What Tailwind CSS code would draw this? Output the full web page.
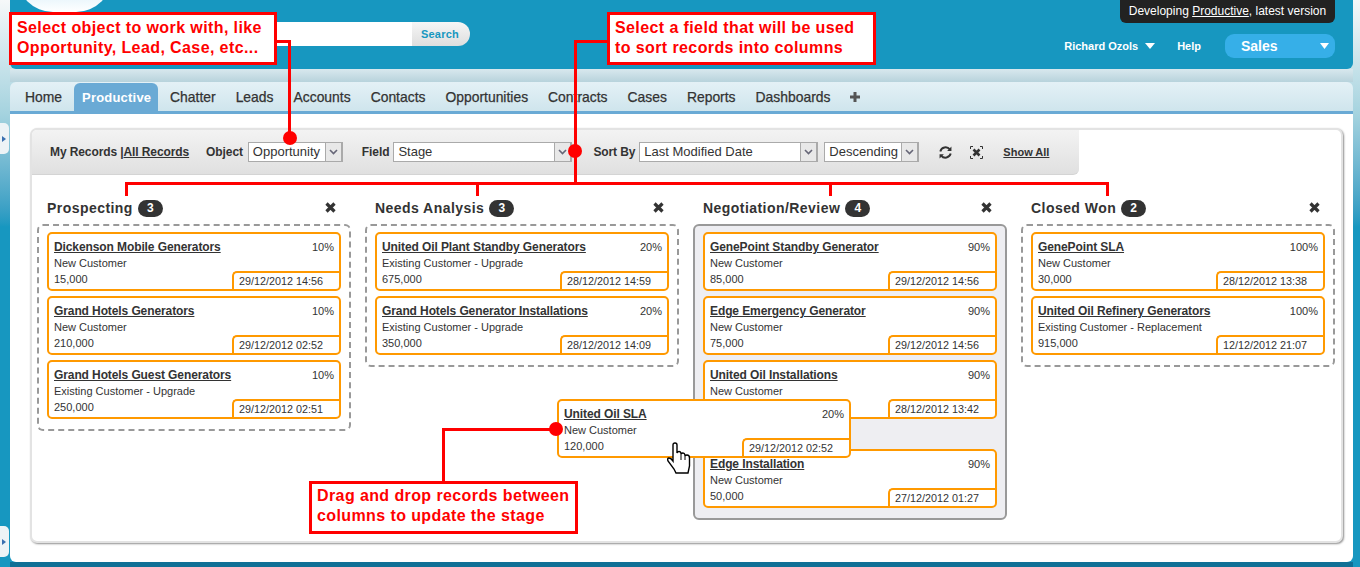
<!DOCTYPE html>
<html lang="en">
<head>
    <meta charset="UTF-8">
    <meta name="viewport" content="width=device-width, initial-scale=1.0">
    <title>Productive</title>
    <script src="https://cdn.jsdelivr.net/npm/@tailwindcss/browser@4"></script>
</head>
<body class="m-0 overflow-hidden">
<div class="relative w-[1360px] h-[567px] overflow-hidden pl-[10px] pr-[7px] flex flex-col font-['Liberation_Sans',Arial,sans-serif] text-[#333] bg-linear-to-b from-[#f6f8f9] via-[#a5d3df] via-[20%] to-[#1797c0] to-[40%]">

    <!-- header -->
    <div class="relative h-[69px] shrink-0 bg-[#1797c0] rounded-b-[6px] flex items-start">
        <div class="absolute left-[7px] -top-[60px] w-[95px] h-[72px] rounded-[40px] bg-linear-to-b from-[#8fd0ec] to-[#ffffff]"></div>
        <div class="ml-[250px] mt-[22px] flex h-[24px]">
            <div class="w-[152px] bg-white"></div>
            <div class="w-[58px] rounded-r-full bg-linear-to-b from-[#f6f6f6] to-[#dedede] text-[#1797c0] text-[11px] font-bold tracking-[0.2px] leading-[24px] pl-[9px]">Search</div>
        </div>
        <div class="ml-auto mr-[18px] mt-[34px] flex items-center h-[24px] text-white">
            <span class="text-[11px] font-bold">Richard Ozols</span>
            <svg class="ml-[7px]" width="10" height="6" viewBox="0 0 10 6"><path d="M0 0h10L5 6z" fill="#fff"/></svg>
            <span class="ml-[22px] text-[11px] font-bold">Help</span>
            <div class="ml-[24px] w-[110px] h-[24px] rounded-[9px] bg-[#36afe8] flex items-center pl-[16px] pr-[6px] justify-between">
                <span class="text-[14px] font-bold">Sales</span>
                <svg width="9" height="6" viewBox="0 0 9 6"><path d="M0 0h9L4.5 6z" fill="#fff"/></svg>
            </div>
        </div>
        <div class="absolute right-[18px] top-0 w-[215px] h-[23px] rounded-b-[6px] bg-[#222] text-white text-[12px] leading-[23px] text-center">Developing <span class="underline">Productive</span>, latest version</div>
    </div>
    <div class="h-[13px] shrink-0 bg-linear-to-b from-[#d8e8ee] to-[#b8d3dc]"></div>

    <!-- tabs -->
    <div class="h-[32px] shrink-0 rounded-t-[6px] bg-linear-to-b from-[#e4f1f6] to-[#cfe5ed] border-b-[3px] border-[#6aaad5] flex items-end pl-[7px] gap-[4px] text-[13.9px] text-[#333] [-webkit-text-stroke:0.25px_#333]">
        <div class="h-[28px] px-[8px] leading-[29px]">Home</div>
        <div class="h-[28px] px-[8px] leading-[29px] rounded-t-[6px] bg-[#6aaad5] text-white font-bold text-[13px] tracking-[0.2px] [-webkit-text-stroke:0px] w-[84px]">Productive</div>
        <div class="h-[28px] px-[8px] leading-[29px]">Chatter</div>
        <div class="h-[28px] px-[8px] leading-[29px]">Leads</div>
        <div class="h-[28px] px-[8px] leading-[29px]">Accounts</div>
        <div class="h-[28px] px-[8px] leading-[29px]">Contacts</div>
        <div class="h-[28px] px-[8px] leading-[29px]">Opportunities</div>
        <div class="h-[28px] px-[8px] leading-[29px]">Contracts</div>
        <div class="h-[28px] px-[8px] leading-[29px]">Cases</div>
        <div class="h-[28px] px-[8px] leading-[29px]">Reports</div>
        <div class="h-[28px] px-[8px] leading-[29px]">Dashboards</div>
        <div class="h-[28px] px-[8px] flex items-center">
            <svg width="10" height="10" viewBox="0 0 10 10"><path d="M3.5 0h3v3.5H10v3H6.500V10h-3V6.500H0v-3h3.500z" fill="#555"/></svg>
        </div>
    </div>

    <!-- main panel -->
    <div class="h-[448px] shrink-0 bg-white rounded-b-[6px] pt-[14px] pl-[20px] pr-[10px]">
        <div class="h-[415px] rounded-[7px] border-2 border-[#e3e3e3] shadow-[1px_1px_2px_#8f8f8f] bg-white">

            <!-- toolbar -->
            <div class="w-[1047px] h-[45px] rounded-br-[6px] rounded-tl-[5px] bg-linear-to-b from-[#f3f3f3] to-[#e0e0e0] border-b border-[#d4d4d4] flex items-center pl-[18px] text-[12px] tracking-[-0.1px] font-bold">
                <span>My Records |<span class="underline">All Records</span></span>
                <span class="ml-[17px]">Object</span>
                <div class="ml-[5px] w-[95px] h-[20px] border border-[#aaa] bg-white flex justify-between font-normal tracking-normal text-[13px] leading-[18px] pl-[4px]">
                    <span>Opportunity</span>
                    <span class="w-[17px] bg-[#e8e8e8] border-l border-r border-[#aaa] flex items-center justify-center"><svg width="9" height="6" viewBox="0 0 9 6"><path d="M1 1l3.5 3.5L8 1" fill="none" stroke="#667" stroke-width="1.6"/></svg></span>
                </div>
                <span class="ml-[19px]">Field</span>
                <div class="ml-[4px] w-[179px] h-[20px] border border-[#aaa] bg-white flex justify-between font-normal tracking-normal text-[13px] leading-[18px] pl-[4px]">
                    <span>Stage</span>
                    <span class="w-[17px] bg-[#e8e8e8] border-l border-r border-[#aaa] flex items-center justify-center"><svg width="9" height="6" viewBox="0 0 9 6"><path d="M1 1l3.5 3.5L8 1" fill="none" stroke="#667" stroke-width="1.6"/></svg></span>
                </div>
                <span class="ml-[21px]">Sort By</span>
                <div class="ml-[4px] w-[179px] h-[20px] border border-[#aaa] bg-white flex justify-between font-normal tracking-normal text-[13px] leading-[18px] pl-[4px]">
                    <span>Last Modified Date</span>
                    <span class="w-[17px] bg-[#e8e8e8] border-l border-r border-[#aaa] flex items-center justify-center"><svg width="9" height="6" viewBox="0 0 9 6"><path d="M1 1l3.5 3.5L8 1" fill="none" stroke="#667" stroke-width="1.6"/></svg></span>
                </div>
                <div class="ml-[6px] w-[95px] h-[20px] border border-[#aaa] bg-white flex justify-between font-normal tracking-normal text-[13px] leading-[18px] pl-[4px]">
                    <span>Descending</span>
                    <span class="w-[17px] bg-[#e8e8e8] border-l border-r border-[#aaa] flex items-center justify-center"><svg width="9" height="6" viewBox="0 0 9 6"><path d="M1 1l3.5 3.5L8 1" fill="none" stroke="#667" stroke-width="1.6"/></svg></span>
                </div>
                <svg class="ml-[20px]" width="13" height="13" viewBox="0 0 12 12" fill="none" stroke="#333" stroke-width="1.8"><path d="M1.200 5A5 5 0 0 1 10 3.200"/><path d="M10.800 7A5 5 0 0 1 2 8.800"/><path d="M11.500 0.500v4h-4z" fill="#333" stroke="none"/><path d="M0.500 11.500v-4h4z" fill="#333" stroke="none"/></svg>
                <svg class="ml-[18px]" width="13" height="13" viewBox="0 0 13 13" fill="none" stroke="#333"><path d="M0.500 3V0.500H3M10 0.500h2.500V3M12.500 10v2.500H10M3 12.500H0.500V10"/><path d="M3.500 3.500l6 6M9.500 3.500l-6 6" stroke-width="2.6"/></svg>
                <span class="ml-[20px] text-[11px] tracking-normal underline">Show All</span>
            </div>

            <!-- columns -->
            <div class="flex gap-[14px] pl-[5px] pt-[22px]">

                <div class="w-[314px]">
                    <div class="h-[27px] flex items-center pb-[4px] pl-[10px] pr-[15px]">
                        <span class="text-[14px] font-bold tracking-[0.45px]">Prospecting</span>
                        <span class="ml-[5px] w-[25px] h-[17px] rounded-full bg-[#333] text-white text-[12px] font-bold leading-[17px] text-center">3</span>
                        <svg class="ml-auto -mt-[2px]" width="11" height="11" viewBox="0 0 11 11"><path d="M1.500 1.500l8 8M9.500 1.500l-8 8" stroke="#333" stroke-width="3.2"/></svg>
                    </div>
                    <div class="border-2 border-dashed border-[#999] rounded-[6px] pt-[6px] pb-[10px] px-[8px] flex flex-col gap-[5px]">
                        <div class="h-[59px] border-2 border-[#f90] rounded-[5px] bg-white pt-[5px] pl-[5px] flex flex-col">
                            <div class="flex justify-between pr-[5px] leading-4"><span class="text-[12px] tracking-[-0.1px] font-bold underline">Dickenson Mobile Generators</span><span class="text-[11px]">10%</span></div>
                            <div class="text-[11px] leading-4">New Customer</div>
                            <div class="flex justify-between text-[11px]"><span class="leading-4">15,000</span><span class="w-[107px] h-[18px] border-t-2 border-l-2 border-[#f90] rounded-tl-[5px] pl-[5px] text-[10.8px] leading-[16px]">29/12/2012 14:56</span></div>
                        </div>
                        <div class="h-[59px] border-2 border-[#f90] rounded-[5px] bg-white pt-[5px] pl-[5px] flex flex-col">
                            <div class="flex justify-between pr-[5px] leading-4"><span class="text-[12px] tracking-[-0.1px] font-bold underline">Grand Hotels Generators</span><span class="text-[11px]">10%</span></div>
                            <div class="text-[11px] leading-4">New Customer</div>
                            <div class="flex justify-between text-[11px]"><span class="leading-4">210,000</span><span class="w-[107px] h-[18px] border-t-2 border-l-2 border-[#f90] rounded-tl-[5px] pl-[5px] text-[10.8px] leading-[16px]">29/12/2012 02:52</span></div>
                        </div>
                        <div class="h-[59px] border-2 border-[#f90] rounded-[5px] bg-white pt-[5px] pl-[5px] flex flex-col">
                            <div class="flex justify-between pr-[5px] leading-4"><span class="text-[12px] tracking-[-0.1px] font-bold underline">Grand Hotels Guest Generators</span><span class="text-[11px]">10%</span></div>
                            <div class="text-[11px] leading-4">Existing Customer - Upgrade</div>
                            <div class="flex justify-between text-[11px]"><span class="leading-4">250,000</span><span class="w-[107px] h-[18px] border-t-2 border-l-2 border-[#f90] rounded-tl-[5px] pl-[5px] text-[10.8px] leading-[16px]">29/12/2012 02:51</span></div>
                        </div>
                    </div>
                </div>

                <div class="w-[314px]">
                    <div class="h-[27px] flex items-center pb-[4px] pl-[10px] pr-[15px]">
                        <span class="text-[14px] font-bold tracking-[0.45px]">Needs Analysis</span>
                        <span class="ml-[5px] w-[25px] h-[17px] rounded-full bg-[#333] text-white text-[12px] font-bold leading-[17px] text-center">3</span>
                        <svg class="ml-auto -mt-[2px]" width="11" height="11" viewBox="0 0 11 11"><path d="M1.500 1.500l8 8M9.500 1.500l-8 8" stroke="#333" stroke-width="3.2"/></svg>
                    </div>
                    <div class="border-2 border-dashed border-[#999] rounded-[6px] pt-[6px] pb-[10px] px-[8px] flex flex-col gap-[5px]">
                        <div class="h-[59px] border-2 border-[#f90] rounded-[5px] bg-white pt-[5px] pl-[5px] flex flex-col">
                            <div class="flex justify-between pr-[5px] leading-4"><span class="text-[12px] tracking-[-0.1px] font-bold underline">United Oil Plant Standby Generators</span><span class="text-[11px]">20%</span></div>
                            <div class="text-[11px] leading-4">Existing Customer - Upgrade</div>
                            <div class="flex justify-between text-[11px]"><span class="leading-4">675,000</span><span class="w-[107px] h-[18px] border-t-2 border-l-2 border-[#f90] rounded-tl-[5px] pl-[5px] text-[10.8px] leading-[16px]">28/12/2012 14:59</span></div>
                        </div>
                        <div class="h-[59px] border-2 border-[#f90] rounded-[5px] bg-white pt-[5px] pl-[5px] flex flex-col">
                            <div class="flex justify-between pr-[5px] leading-4"><span class="text-[12px] tracking-[-0.1px] font-bold underline">Grand Hotels Generator Installations</span><span class="text-[11px]">20%</span></div>
                            <div class="text-[11px] leading-4">Existing Customer - Upgrade</div>
                            <div class="flex justify-between text-[11px]"><span class="leading-4">350,000</span><span class="w-[107px] h-[18px] border-t-2 border-l-2 border-[#f90] rounded-tl-[5px] pl-[5px] text-[10.8px] leading-[16px]">28/12/2012 14:09</span></div>
                        </div>
                    </div>
                </div>

                <div class="w-[314px]">
                    <div class="h-[27px] flex items-center pb-[4px] pl-[10px] pr-[15px]">
                        <span class="text-[14px] font-bold tracking-[0.45px]">Negotiation/Review</span>
                        <span class="ml-[5px] w-[25px] h-[17px] rounded-full bg-[#333] text-white text-[12px] font-bold leading-[17px] text-center">4</span>
                        <svg class="ml-auto -mt-[2px]" width="11" height="11" viewBox="0 0 11 11"><path d="M1.500 1.500l8 8M9.500 1.500l-8 8" stroke="#333" stroke-width="3.2"/></svg>
                    </div>
                    <div class="border-2 border-[#999] rounded-[6px] bg-[#eeeef2] pt-[6px] pb-[10px] px-[8px] flex flex-col gap-[5px]">
                        <div class="h-[59px] border-2 border-[#f90] rounded-[5px] bg-white pt-[5px] pl-[5px] flex flex-col">
                            <div class="flex justify-between pr-[5px] leading-4"><span class="text-[12px] tracking-[-0.1px] font-bold underline">GenePoint Standby Generator</span><span class="text-[11px]">90%</span></div>
                            <div class="text-[11px] leading-4">New Customer</div>
                            <div class="flex justify-between text-[11px]"><span class="leading-4">85,000</span><span class="w-[107px] h-[18px] border-t-2 border-l-2 border-[#f90] rounded-tl-[5px] pl-[5px] text-[10.8px] leading-[16px]">29/12/2012 14:56</span></div>
                        </div>
                        <div class="h-[59px] border-2 border-[#f90] rounded-[5px] bg-white pt-[5px] pl-[5px] flex flex-col">
                            <div class="flex justify-between pr-[5px] leading-4"><span class="text-[12px] tracking-[-0.1px] font-bold underline">Edge Emergency Generator</span><span class="text-[11px]">90%</span></div>
                            <div class="text-[11px] leading-4">New Customer</div>
                            <div class="flex justify-between text-[11px]"><span class="leading-4">75,000</span><span class="w-[107px] h-[18px] border-t-2 border-l-2 border-[#f90] rounded-tl-[5px] pl-[5px] text-[10.8px] leading-[16px]">29/12/2012 14:56</span></div>
                        </div>
                        <div class="h-[59px] border-2 border-[#f90] rounded-[5px] bg-white pt-[5px] pl-[5px] flex flex-col">
                            <div class="flex justify-between pr-[5px] leading-4"><span class="text-[12px] tracking-[-0.1px] font-bold underline">United Oil Installations</span><span class="text-[11px]">90%</span></div>
                            <div class="text-[11px] leading-4">New Customer</div>
                            <div class="flex justify-between text-[11px]"><span class="leading-4">65,000</span><span class="w-[107px] h-[18px] border-t-2 border-l-2 border-[#f90] rounded-tl-[5px] pl-[5px] text-[10.8px] leading-[16px]">28/12/2012 13:42</span></div>
                        </div>
                        <div class="mt-[25px] h-[59px] border-2 border-[#f90] rounded-[5px] bg-white pt-[5px] pl-[5px] flex flex-col">
                            <div class="flex justify-between pr-[5px] leading-4"><span class="text-[12px] tracking-[-0.1px] font-bold underline">Edge Installation</span><span class="text-[11px]">90%</span></div>
                            <div class="text-[11px] leading-4">New Customer</div>
                            <div class="flex justify-between text-[11px]"><span class="leading-4">50,000</span><span class="w-[107px] h-[18px] border-t-2 border-l-2 border-[#f90] rounded-tl-[5px] pl-[5px] text-[10.8px] leading-[16px]">27/12/2012 01:27</span></div>
                        </div>
                    </div>
                </div>

                <div class="w-[314px]">
                    <div class="h-[27px] flex items-center pb-[4px] pl-[10px] pr-[15px]">
                        <span class="text-[14px] font-bold tracking-[0.45px]">Closed Won</span>
                        <span class="ml-[5px] w-[25px] h-[17px] rounded-full bg-[#333] text-white text-[12px] font-bold leading-[17px] text-center">2</span>
                        <svg class="ml-auto -mt-[2px]" width="11" height="11" viewBox="0 0 11 11"><path d="M1.500 1.500l8 8M9.500 1.500l-8 8" stroke="#333" stroke-width="3.2"/></svg>
                    </div>
                    <div class="border-2 border-dashed border-[#999] rounded-[6px] pt-[6px] pb-[10px] px-[8px] flex flex-col gap-[5px]">
                        <div class="h-[59px] border-2 border-[#f90] rounded-[5px] bg-white pt-[5px] pl-[5px] flex flex-col">
                            <div class="flex justify-between pr-[5px] leading-4"><span class="text-[12px] tracking-[-0.1px] font-bold underline">GenePoint SLA</span><span class="text-[11px]">100%</span></div>
                            <div class="text-[11px] leading-4">New Customer</div>
                            <div class="flex justify-between text-[11px]"><span class="leading-4">30,000</span><span class="w-[107px] h-[18px] border-t-2 border-l-2 border-[#f90] rounded-tl-[5px] pl-[5px] text-[10.8px] leading-[16px]">28/12/2012 13:38</span></div>
                        </div>
                        <div class="h-[59px] border-2 border-[#f90] rounded-[5px] bg-white pt-[5px] pl-[5px] flex flex-col">
                            <div class="flex justify-between pr-[5px] leading-4"><span class="text-[12px] tracking-[-0.1px] font-bold underline">United Oil Refinery Generators</span><span class="text-[11px]">100%</span></div>
                            <div class="text-[11px] leading-4">Existing Customer - Replacement</div>
                            <div class="flex justify-between text-[11px]"><span class="leading-4">915,000</span><span class="w-[107px] h-[18px] border-t-2 border-l-2 border-[#f90] rounded-tl-[5px] pl-[5px] text-[10.8px] leading-[16px]">12/12/2012 21:07</span></div>
                        </div>
                    </div>
                </div>
            </div>
        </div>
    </div>
    <div class="flex-1 bg-[#0f7096]"></div>

    <!-- sidebar handles -->
    <div class="absolute left-0 top-[123px] w-[9px] h-[31px] rounded-r-[5px] bg-[#edf3f6] flex items-center pl-[2px]">
        <svg width="5" height="6" viewBox="0 0 5 6"><path d="M0 0l4 3-4 3z" fill="#3a6fb0"/></svg>
    </div>
    <div class="absolute left-0 top-[526px] w-[9px] h-[31px] rounded-r-[5px] bg-[#edf3f6] flex items-center pl-[2px]">
        <svg width="5" height="6" viewBox="0 0 5 6"><path d="M0 0l4 3-4 3z" fill="#3a6fb0"/></svg>
    </div>

    <!-- record being dragged -->
    <div class="absolute left-[557px] top-[399px] w-[294px] h-[59px] border-2 border-[#f90] rounded-[5px] bg-white pt-[5px] pl-[5px] flex flex-col">
        <div class="flex justify-between pr-[5px] leading-4"><span class="text-[12px] tracking-[-0.1px] font-bold underline">United Oil SLA</span><span class="text-[11px]">20%</span></div>
        <div class="text-[11px] leading-4">New Customer</div>
        <div class="flex justify-between text-[11px]"><span class="leading-4">120,000</span><span class="w-[107px] h-[18px] border-t-2 border-l-2 border-[#f90] rounded-tl-[5px] pl-[5px] text-[10.8px] leading-[16px]">29/12/2012 02:52</span></div>
    </div>

    <!-- callout connectors -->
    <svg class="absolute left-0 top-0 pointer-events-none" width="1360" height="567" viewBox="0 0 1360 567" fill="none" stroke="#f00" stroke-width="3">
        <path d="M277 41.500H289.500V138"/>
        <path d="M607 41.500H575.500V183.500"/>
        <path d="M126.500 196V183.500H1107.500V196M477.500 183.500V196M830.500 183.500V196"/>
        <path d="M556 429.500H443.500V481"/>
        <circle cx="290" cy="138" r="7" fill="#f00" stroke="none"/>
        <circle cx="575" cy="151" r="7" fill="#f00" stroke="none"/>
        <circle cx="556" cy="429" r="7" fill="#f00" stroke="none"/>
    </svg>

    <!-- hand cursor -->
    <svg class="absolute left-[667px] top-[442px]" width="25" height="32" viewBox="0 0 25 32" fill="#fff" stroke="#000" stroke-width="1.4">
        <path d="M6 3Q6 1 8 1T10 3V11Q10.500 9.500 12 9.500T14 11V12Q14.500 11 16 11T18 13V14Q18.500 13 20 13Q22.500 13 22.500 16V24L21 31H9L7 27L1 19Q0 16 2 16T6 19Z"/>
        <path d="M14 12V18M18 14V18" fill="none" stroke-width="1"/>
    </svg>

    <!-- callouts -->
    <div class="absolute left-[9px] top-[12px] w-[268px] h-[53px] border-[3px] border-[#f00] bg-white text-[#f00] text-[16px] tracking-[0.4px] font-bold leading-[20px] pl-[5px] pt-[3px]">Select object to work with, like<br>Opportunity, Lead, Case, etc...</div>
    <div class="absolute left-[607px] top-[12px] w-[269px] h-[53px] border-[3px] border-[#f00] bg-white text-[#f00] text-[16px] tracking-[0.4px] font-bold leading-[20px] pl-[5px] pt-[3px]">Select a field that will be used<br>to sort records into columns</div>
    <div class="absolute left-[309px] top-[481px] w-[269px] h-[53px] border-[3px] border-[#f00] bg-white text-[#f00] text-[16px] tracking-[0.4px] font-bold leading-[20px] pl-[5px] pt-[2px]">Drag and drop records between<br>columns to update the stage</div>
</div>
</body>
</html>
